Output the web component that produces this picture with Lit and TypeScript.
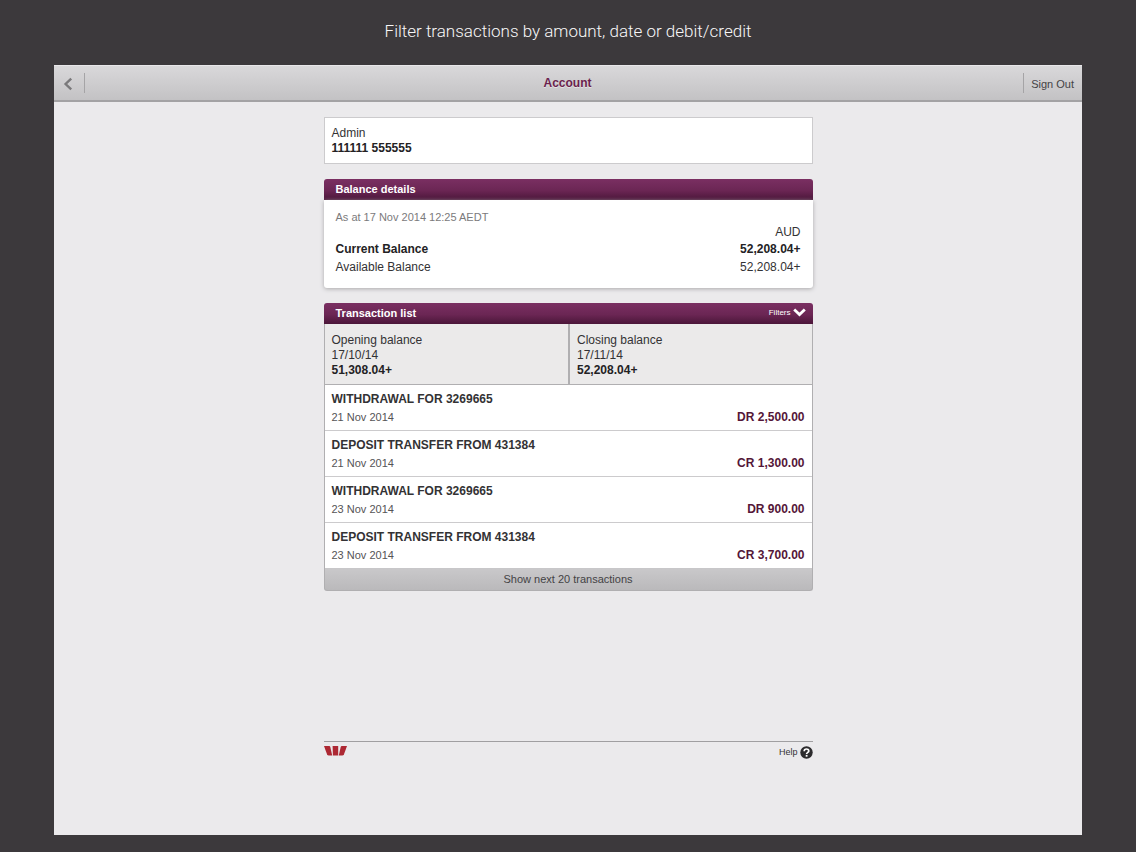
import { LitElement, html, css } from "lit";
import { customElement, property } from "lit/decorators.js";

interface Transaction {
  title: string;
  date: string;
  amount: string;
}

const TRANSACTIONS: Transaction[] = [
  { title: "WITHDRAWAL FOR 3269665", date: "21 Nov 2014", amount: "DR 2,500.00" },
  { title: "DEPOSIT TRANSFER FROM 431384", date: "21 Nov 2014", amount: "CR 1,300.00" },
  { title: "WITHDRAWAL FOR 3269665", date: "23 Nov 2014", amount: "DR 900.00" },
  { title: "DEPOSIT TRANSFER FROM 431384", date: "23 Nov 2014", amount: "CR 3,700.00" },
];

@customElement("app-toolbar")
export class AppToolbar extends LitElement {
  @property() heading = "";

  static styles = css`
    :host {
      display: block;
    }
    .bar {
      display: grid;
      grid-template-columns: 1fr auto 1fr;
      align-items: center;
      height: 37px;
      box-sizing: border-box;
      padding: 0 8px 0 7px;
      background: linear-gradient(#d9d8da, #c3c2c4);
      border-top: 1px solid #e8e7e9;
      border-bottom: 2px solid #a3a2a4;
    }
    .back,
    .sign-out {
      display: flex;
      align-items: center;
      height: 20px;
      padding: 2px 0 0;
      background: none;
      font: inherit;
      font-size: 11px;
      color: #444345;
      border: 0 solid #a5a4a6;
      cursor: pointer;
    }
    .back {
      justify-self: start;
      width: 24px;
      padding-left: 2px;
      border-right-width: 1px;
    }
    .sign-out {
      justify-self: end;
      padding-left: 7px;
      border-left-width: 1px;
    }
    .heading {
      margin: 0;
      font-size: 12px;
      line-height: 18px;
      color: #6b1f4d;
      text-shadow: 0 1px 0 #e4e3e5;
    }
  `;

  render() {
    return html`
      <header class="bar">
        <button class="back" aria-label="Back">
          <svg width="10" height="14" viewBox="0 0 10 14" fill="none" stroke="#7a797b" stroke-width="2.4">
            <path d="M8.2 1.6 2.6 7l5.6 5.4" />
          </svg>
        </button>
        <h1 class="heading">${this.heading}</h1>
        <button class="sign-out">Sign Out</button>
      </header>
    `;
  }
}

@customElement("app-root")
export class AppRoot extends LitElement {
  static styles = css`
    :host {
      display: flex;
      flex-direction: column;
      box-sizing: border-box;
      min-height: 100vh;
      padding: 0 54px 17px;
      background: #3c393c;
      color: #333234;
      font: 12px/15px "Liberation Sans", Arial, sans-serif;
    }
    button {
      margin: 0;
      border: 0;
      font-family: inherit;
      cursor: pointer;
    }
    .caption {
      margin: 0;
      padding: 18px 0 21px;
      font: 300 17px/26px Roboto, "Liberation Sans", Arial, sans-serif;
      text-align: center;
      color: #f8f7f8;
    }
    .screen {
      flex: 1;
      background: #ebeaec;
    }
    .content {
      max-width: 489px;
      margin: 0 auto;
      padding: 15px 8px;
    }
    .account {
      padding: 8px 7px 7px;
      margin-bottom: 15px;
      background: #fff;
      border: 1px solid #cccbcd;
      line-height: 15px;
    }
    .account p,
    .summary p {
      margin: 0;
    }
    .strong {
      font-weight: bold;
      color: #232224;
    }
    .panel {
      margin-bottom: 15px;
      border-radius: 3px;
    }
    .panel-head {
      display: flex;
      align-items: center;
      justify-content: space-between;
      box-sizing: border-box;
      height: 21px;
      padding: 0 7px 2px 12px;
      background: linear-gradient(#7a2f62, #6b2654 55%, #4b1639);
      border-radius: 3px 3px 0 0;
      color: #fff;
    }
    .panel-head h2 {
      margin: 0;
      font-size: 11px;
      line-height: 18px;
    }
    .filters {
      display: flex;
      align-items: center;
      gap: 2px;
      padding: 0;
      background: none;
      color: #fff;
      font-size: 8px;
      line-height: 12px;
    }
    .balances {
      padding: 10px 12px 12px;
      background: #fff;
      box-shadow: 0 1px 4px #aaa9ab;
      border-radius: 0 0 3px 3px;
    }
    .as-at {
      margin: 0;
      font-size: 11px;
      line-height: 15px;
      color: #7b7a7c;
    }
    .balance-table {
      width: 100%;
      border-collapse: collapse;
      line-height: 18px;
    }
    .balance-table th,
    .balance-table td {
      padding: 0;
      font-weight: normal;
      text-align: left;
      vertical-align: top;
    }
    .balance-table .amount {
      text-align: right;
    }
    .balance-table .current th,
    .balance-table .current td {
      font-weight: bold;
      color: #232224;
    }
    .short {
      line-height: 15px;
    }
    .summary {
      display: grid;
      grid-template-columns: 1fr 1fr;
      background: #ebeaea;
      border: 1px solid #b0afb1;
      border-top: 0;
    }
    .summary > div {
      padding: 9px 7px 6px;
    }
    .summary > div + div {
      border-left: 2px solid #b0afb1;
    }
    .transactions {
      margin: 0;
      padding: 0;
      list-style: none;
      background: #fff;
      border: 0 solid #b0afb1;
      border-width: 0 1px;
    }
    .transaction {
      padding: 5px 7px 4px;
      line-height: 18px;
      border-bottom: 1px solid #cccbcd;
    }
    .transaction:last-child {
      border-bottom-color: #c8c7c9;
    }
    .title {
      margin: 0;
      font-size: 12px;
      font-weight: bold;
    }
    .detail {
      display: flex;
      justify-content: space-between;
    }
    .date {
      font-size: 11px;
      color: #555456;
    }
    .value {
      font-weight: bold;
      color: #541638;
    }
    .more {
      display: block;
      width: 100%;
      height: 22px;
      padding: 0;
      background: linear-gradient(#c9c8ca, #bab9bb);
      border: 1px solid #b0afb1;
      border-top: 0;
      border-radius: 0 0 3px 3px;
      color: #444345;
      font-size: 11px;
      line-height: 21px;
    }
    .foot {
      display: flex;
      justify-content: space-between;
      align-items: center;
      height: 20px;
      margin-top: 150px;
      border-top: 1px solid #a09fa1;
    }
    .logo {
      margin-bottom: 2px;
    }
    .help {
      display: flex;
      align-items: center;
      gap: 2px;
      color: #333234;
      font-size: 9px;
      line-height: 12px;
      text-decoration: none;
    }
  `;

  render() {
    return html`
      <p class="caption">Filter transactions by amount, date or debit/credit</p>
      <div class="screen">
        <app-toolbar heading="Account"></app-toolbar>
        <main class="content">
          <section class="account">
            <p>Admin</p>
            <p class="strong">111111 555555</p>
          </section>

          <section class="panel">
            <div class="panel-head"><h2>Balance details</h2></div>
            <div class="balances">
              <p class="as-at">As at 17 Nov 2014 12:25 AEDT</p>
              <table class="balance-table">
                <thead class="short">
                  <tr>
                    <td></td>
                    <th class="amount" scope="col">AUD</th>
                  </tr>
                </thead>
                <tbody>
                  <tr class="current">
                    <th scope="row">Current Balance</th>
                    <td class="amount">52,208.04+</td>
                  </tr>
                  <tr>
                    <th scope="row">Available Balance</th>
                    <td class="amount">52,208.04+</td>
                  </tr>
                </tbody>
              </table>
            </div>
          </section>

          <section class="panel">
            <div class="panel-head">
              <h2>Transaction list</h2>
              <button class="filters">
                Filters
                <svg width="13" height="9" viewBox="0 0 13 9" fill="none" stroke="#fff" stroke-width="2.8">
                  <path d="M1.2 1.6 6.5 6.6l5.3-5" />
                </svg>
              </button>
            </div>
            <div class="summary">
              <div>
                <p>Opening balance</p>
                <p>17/10/14</p>
                <p class="strong">51,308.04+</p>
              </div>
              <div>
                <p>Closing balance</p>
                <p>17/11/14</p>
                <p class="strong">52,208.04+</p>
              </div>
            </div>
            <ul class="transactions">
              ${TRANSACTIONS.map(
                (t) => html`
                  <li class="transaction">
                    <h3 class="title">${t.title}</h3>
                    <div class="detail">
                      <span class="date">${t.date}</span>
                      <span class="value">${t.amount}</span>
                    </div>
                  </li>
                `
              )}
            </ul>
            <button class="more">Show next 20 transactions</button>
          </section>

          <footer class="foot">
            <svg class="logo" width="23" height="10" viewBox="0 0 23 10" fill="#ad2833" role="img" aria-label="Westpac">
              <path d="M0 0h5.2q.9 0 1.1.9L8.2 9.5H4.9Q3.5 9.5 3 8.2z" />
              <path d="M8.6 0h5.6v9.5H8.9z" />
              <path d="M23 0h-5.2q-.9 0-1.1.9l-1.9 8.6h3.3q1.4 0 1.9-1.3z" />
            </svg>
            <a class="help" href="#help">
              Help
              <svg width="13" height="13" viewBox="0 0 13 13" aria-hidden="true">
                <circle cx="6.5" cy="6.5" r="6.2" fill="#2c2b2d" />
                <path d="M4.2 5.2C4.2 2.3 8.8 2.4 8.8 4.9 8.8 6.5 6.6 6.2 6.6 8.1" fill="none" stroke="#fff" stroke-width="1.7" />
                <rect x="5.7" y="8.9" width="1.8" height="1.8" fill="#fff" />
              </svg>
            </a>
          </footer>
        </main>
      </div>
    `;
  }
}
